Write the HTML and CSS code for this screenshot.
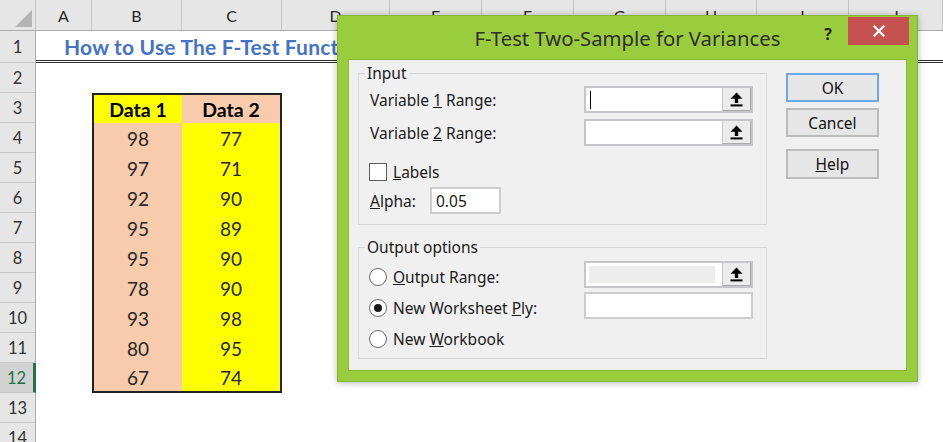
FILE: index.html
```html
<!DOCTYPE html>
<html>
<head>
<meta charset="utf-8">
<link rel="stylesheet" href="styles.css">
</head>
<body>
<div class="sheet">
  <div class="row colhead">
    <div class="corner"><svg width="36" height="31" viewBox="0 0 36 31"><polygon points="15,27 32,10 32,27" fill="#b4b4b4"/></svg></div>
    <div class="ch">A</div><div class="ch">B</div><div class="ch">C</div><div class="ch">D</div><div class="ch">E</div>
    <div class="ch">F</div><div class="ch">G</div><div class="ch">H</div><div class="ch">I</div><div class="ch">J</div>
  </div>
  <div class="row r1"><div class="rh">1</div><div class="title-cell">How to Use The F-Test Function in Excel</div></div>
  <div class="row"><div class="rh">2</div></div>
  <div class="row"><div class="rh">3</div><div class="ca"></div><div class="cell hd yellow tb-top lft">Data 1</div><div class="cell hd peach tb-top rgt">Data 2</div></div>
  <div class="row"><div class="rh">4</div><div class="ca"></div><div class="cell peach lft">98</div><div class="cell yellow rgt">77</div></div>
  <div class="row"><div class="rh">5</div><div class="ca"></div><div class="cell peach lft">97</div><div class="cell yellow rgt">71</div></div>
  <div class="row"><div class="rh">6</div><div class="ca"></div><div class="cell peach lft">92</div><div class="cell yellow rgt">90</div></div>
  <div class="row"><div class="rh">7</div><div class="ca"></div><div class="cell peach lft">95</div><div class="cell yellow rgt">89</div></div>
  <div class="row"><div class="rh">8</div><div class="ca"></div><div class="cell peach lft">95</div><div class="cell yellow rgt">90</div></div>
  <div class="row"><div class="rh">9</div><div class="ca"></div><div class="cell peach lft">78</div><div class="cell yellow rgt">90</div></div>
  <div class="row"><div class="rh">10</div><div class="ca"></div><div class="cell peach lft">93</div><div class="cell yellow rgt">98</div></div>
  <div class="row"><div class="rh">11</div><div class="ca"></div><div class="cell peach lft">80</div><div class="cell yellow rgt">95</div></div>
  <div class="row"><div class="rh sel">12</div><div class="ca"></div><div class="cell peach lft tb-bot">67</div><div class="cell yellow rgt tb-bot">74</div></div>
  <div class="row"><div class="rh">13</div></div>
  <div class="row"><div class="rh">14</div></div>
</div>

<div class="dialog">
  <div class="titlebar">
    <div></div>
    <div class="dlg-title">F-Test Two-Sample for Variances</div>
    <div class="tb-right">
      <span class="help-q">?</span>
      <div class="close"><svg width="12" height="12" viewBox="0 0 12 12"><path d="M1.5 1.5 L10.5 10.5 M10.5 1.5 L1.5 10.5" stroke="#fff" stroke-width="2.2" stroke-linecap="square"/></svg></div>
    </div>
  </div>
  <div class="panel">
    <div class="left">
      <div class="group g-input">
        <div class="gtitle">Input</div>
        <div class="frow first">
          <span class="flabel">Variable <u>1</u> Range:</span>
          <div class="refedit"><div class="field"><span class="caret"></span></div><div class="refbtn"><svg width="13" height="15" viewBox="0 0 13 15"><path d="M6.5 0.5 L12.5 6.8 H8.2 V11 H4.8 V6.8 H0.5 Z" fill="#000"/><rect x="0.5" y="12.4" width="12" height="2" fill="#000"/></svg></div></div>
        </div>
        <div class="frow second">
          <span class="flabel">Variable <u>2</u> Range:</span>
          <div class="refedit"><div class="field"></div><div class="refbtn"><svg width="13" height="15" viewBox="0 0 13 15"><path d="M6.5 0.5 L12.5 6.8 H8.2 V11 H4.8 V6.8 H0.5 Z" fill="#000"/><rect x="0.5" y="12.4" width="12" height="2" fill="#000"/></svg></div></div>
        </div>
        <div class="crow chk">
          <span class="checkbox"></span><span><u>L</u>abels</span>
        </div>
        <div class="frow alpha">
          <span class="alabel"><u>A</u>lpha:</span>
          <div class="textbox small">0.05</div>
        </div>
      </div>

      <div class="group g-output">
        <div class="gtitle">Output options</div>
        <div class="frow o1">
          <span class="rlabel"><span class="radio"></span><span><u>O</u>utput Range:</span></span>
          <div class="refedit disabled"><div class="field"><div class="dis-fill"></div></div><div class="refbtn"><svg width="13" height="15" viewBox="0 0 13 15"><path d="M6.5 0.5 L12.5 6.8 H8.2 V11 H4.8 V6.8 H0.5 Z" fill="#000"/><rect x="0.5" y="12.4" width="12" height="2" fill="#000"/></svg></div></div>
        </div>
        <div class="frow o2">
          <span class="rlabel"><span class="radio on"></span><span>New Worksheet <u>P</u>ly:</span></span>
          <div class="textbox wide"></div>
        </div>
        <div class="crow o3">
          <span class="radio"></span><span>New <u>W</u>orkbook</span>
        </div>
      </div>
    </div>
    <div class="buttons">
      <div class="btn ok">OK</div>
      <div class="btn cancel">Cancel</div>
      <div class="btn helpbtn"><span><u>H</u>elp</span></div>
    </div>
  </div>
</div>
</body>
</html>
```

FILE: styles.css
```css
html, body {
  margin: 0;
  padding: 0;
  background: #ffffff;
  overflow: hidden;
  width: 943px;
  height: 442px;
}

.sheet {
  font-family: Lato, "Liberation Sans", sans-serif;
  width: 943px;
}

.row {
  display: grid;
  grid-template-columns: 36px 56px 90px 100px 108px 92px 92px 92px 91px 92px 94px;
  height: 30px;
}

.colhead {
  height: 31px;
  background: #e6e6e6;
  border-bottom: 1px solid #ababab;
  box-sizing: border-box;
}

.corner {
  border-right: 1px solid #c3c3c3;
  height: 30px;
  overflow: hidden;
}

.ch {
  border-right: 1px solid #c3c3c3;
  display: flex;
  justify-content: center;
  padding-top: 6px;
  font-size: 16px;
  color: #262626;
  box-sizing: border-box;
}

.rh {
  background: #e6e6e6;
  border-right: 1px solid #ababab;
  border-bottom: 1px solid #c8c8c8;
  box-sizing: border-box;
  display: flex;
  align-items: center;
  justify-content: center;
  font-size: 16.5px;
  color: #333;
}

.rh.sel {
  background: #d2d2d2;
  border-right: 3px solid #217346;
  color: #217346;
}

.r1 {
  height: 32px;
}

.title-cell {
  grid-column: 2 / -1;
  border-bottom: 3px double #2a2a2a;
  box-sizing: border-box;
  padding-left: 28px;
  padding-top: 1px;
  display: flex;
  align-items: center;
  white-space: nowrap;
  overflow: hidden;
  font-weight: 700;
  font-size: 21px;
  letter-spacing: 0.2px;
  color: #4472c4;
}

.cell {
  display: flex;
  align-items: center;
  justify-content: center;
  font-size: 19px;
  color: #262626;
  box-sizing: border-box;
}

.cell.hd {
  font-weight: 700;
  font-size: 19.5px;
  color: #000;
}

.yellow { background: #ffff00; }
.peach { background: #f8cbad; }

.tb-top { border-top: 2px solid #222; }
.tb-bot { border-bottom: 2px solid #222; }
.lft { border-left: 2px solid #222; }
.rgt { border-right: 2px solid #222; }

/* ---------- dialog ---------- */
.dialog {
  position: absolute;
  left: 337px;
  top: 15px;
  width: 581px;
  height: 367px;
  box-sizing: border-box;
  background: #9acd3e;
  border: 1px solid #86b634;
  box-shadow: 0 1px 7px rgba(0, 0, 0, 0.28);
  display: flex;
  flex-direction: column;
  padding: 0 10px 10px 10px;
  font-family: "Noto Sans", "Open Sans", sans-serif;
  color: #1a1a1a;
}

.titlebar {
  height: 43px;
  margin: 0 -10px;
  display: grid;
  grid-template-columns: 1fr auto 1fr;
}

.dlg-title {
  align-self: center;
  font-size: 20.3px;
  color: #2e2e2e;
  white-space: nowrap;
  padding-top: 1px;
}

.tb-right {
  display: flex;
  justify-content: flex-end;
  align-items: flex-start;
}

.help-q {
  font-weight: 700;
  font-size: 16px;
  color: #262626;
  margin-top: 7px;
  margin-right: 16px;
}

.close {
  width: 61px;
  height: 28px;
  margin: 1px 8px 0 0;
  background: #c75050;
  display: flex;
  align-items: center;
  justify-content: center;
}

.panel {
  flex: 1;
  background: #f0f0f0;
  border: 1px solid #87b83a;
  display: flex;
  padding: 13px 0 0 9px;
  font-size: 15.5px;
}

.left {
  width: 409px;
}

.group {
  border: 1px solid #d7d7d7;
  padding: 0 12px 10px 10px;
}

.g-output {
  margin-top: 22px;
}

.gtitle {
  margin: -10px 0 0 -4px;
  padding: 0 2px;
  background: #f0f0f0;
  width: fit-content;
  line-height: 18px;
}

.frow {
  display: flex;
  align-items: center;
  height: 27px;
}

.frow.first { margin-top: 4px; }
.frow.second { margin-top: 6px; }
.frow.alpha { margin-top: 6px; }
.frow.o1 { margin-top: 5px; }
.frow.o2 { margin-top: 4px; }

.flabel {
  width: 214px;
  padding-left: 1px;
}

.rlabel {
  width: 215px;
  display: flex;
  align-items: center;
  gap: 6px;
  margin-top: 4px;
}

.crow {
  display: flex;
  align-items: center;
  gap: 6px;
  height: 18px;
  line-height: 18px;
}

.crow.chk { margin-top: 17px; }
.crow.o3 { margin-top: 11px; }

.checkbox {
  width: 18px;
  height: 18px;
  box-sizing: border-box;
  border: 1px solid #5e5e5e;
  background: #fff;
}

.radio {
  width: 18px;
  height: 18px;
  box-sizing: border-box;
  border: 1px solid #6a6a6a;
  border-radius: 50%;
  background: #fff;
  display: flex;
  align-items: center;
  justify-content: center;
}

.radio.on::after {
  content: "";
  width: 8px;
  height: 8px;
  border-radius: 50%;
  background: #1a1a1a;
}

.refedit {
  width: 169px;
  height: 27px;
  box-sizing: border-box;
  border: 2px solid #c6c6ca;
  display: flex;
  background: #fff;
}

.field {
  flex: 1;
  display: flex;
  align-items: center;
}

.caret {
  width: 1px;
  height: 18px;
  background: #000;
  margin-left: 4px;
}

.refedit.disabled .field {
  padding: 3px 7px 3px 3px;
  align-items: stretch;
}

.dis-fill {
  flex: 1;
  background: #ececec;
}

.refbtn {
  width: 29px;
  box-sizing: border-box;
  background: #ececec;
  border-left: 1px solid #c8c8c8;
  border-right: 1px solid #a9a9a9;
  border-bottom: 1px solid #a9a9a9;
  display: flex;
  align-items: center;
  justify-content: center;
}

.alabel {
  width: 60px;
  padding-left: 1px;
}

.textbox {
  height: 27px;
  box-sizing: border-box;
  border: 2px solid #cdcdcd;
  background: #fff;
  display: flex;
  align-items: center;
  padding-left: 4px;
}

.textbox.small { width: 71px; }
.textbox.wide { width: 169px; }

.buttons {
  margin-left: 19px;
  width: 93px;
  display: flex;
  flex-direction: column;
}

.btn {
  height: 29px;
  box-sizing: border-box;
  border: 2px solid #bcbcbc;
  background: #e6e6e6;
  display: flex;
  align-items: center;
  justify-content: center;
  color: #111;
}

.btn.ok {
  border-color: #6aa9e6;
}

.btn.cancel { margin-top: 6px; }
.btn.helpbtn { margin-top: 12px; height: 30px; }
```
